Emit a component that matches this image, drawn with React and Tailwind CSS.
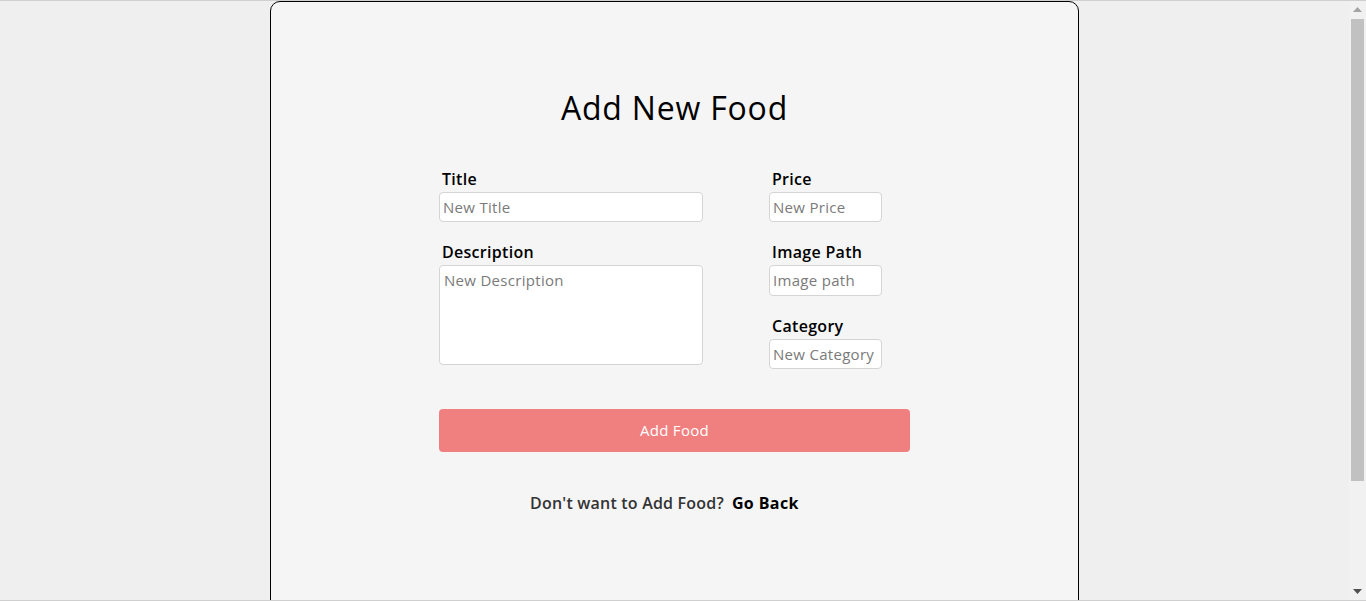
function Field({ label, placeholder, width, textarea }) {
  return (
    <div className="flex flex-col">
      <label className="pl-[3px] mb-px text-base leading-6 font-semibold text-black tracking-[0.3px]">{label}</label>
      {textarea ? (
        <textarea
          placeholder={placeholder}
          className={`${width} h-[100px] resize-none rounded bg-white border border-[#d4d4d4] px-1 py-[2px] text-[15px] leading-6 tracking-[0.3px] text-black placeholder:text-[#7a7a7a] outline-none`}
        />
      ) : (
        <input
          placeholder={placeholder}
          className={`${width} rounded bg-white border border-[#d4d4d4] px-[3px] pb-px text-[15px] tracking-[0.3px] text-black placeholder:text-[#7a7a7a] outline-none`}
        />
      )}
    </div>
  )
}

function Scrollbar() {
  return (
    <div className="w-[17px] h-full bg-[#f1f1f1] flex flex-col items-center">
      <div className="h-[17px] flex items-center justify-center">
        <svg width="9" height="5" viewBox="0 0 9 5"><path d="M4.5 0L9 5H0z" fill="#a3a3a3" /></svg>
      </div>
      <div className="w-[13px] h-[462px] bg-[#c1c1c1] mt-px" />
      <div className="flex-1" />
      <div className="h-[17px] flex items-center justify-center">
        <svg width="9" height="5" viewBox="0 0 9 5"><path d="M0 0H9L4.5 5z" fill="#505050" /></svg>
      </div>
    </div>
  )
}

export default function App() {
  return (
    <div
      className="h-[601px] flex overflow-hidden bg-[#efefef] border-t border-b border-[#cfcfcf]"
      style={{ fontFamily: '"Open Sans", "Noto Sans", sans-serif' }}
    >
      <div className="flex-1 overflow-hidden">
        <div className="mx-auto w-[60%] h-[736px] bg-[#f5f5f5] border border-black rounded-[10px] pt-[82px] flex flex-col items-center">
          <h1 className="text-[32px] leading-[48px] font-medium text-black tracking-[0.8px]">Add New Food</h1>

          <form className="mt-[35px] w-[471px] flex flex-col">
            <div className="flex gap-[66px]">
              <div className="flex flex-col gap-[18px]">
                <Field label="Title" placeholder="New Title" width="w-[264px] h-[30px]" />
                <Field label="Description" placeholder="New Description" width="w-[264px]" textarea />
              </div>
              <div className="flex flex-col gap-[18px]">
                <Field label="Price" placeholder="New Price" width="w-[113px] h-[30px]" />
                <Field label="Image Path" placeholder="Image path" width="w-[113px] h-[31px]" />
                <Field label="Category" placeholder="New Category" width="w-[113px] h-[30px]" />
              </div>
            </div>

            <button
              type="button"
              className="mt-10 h-[43px] w-full rounded bg-[#f08080] text-white text-[15px] tracking-[0.3px]"
            >
              Add Food
            </button>
          </form>

          <p className="mt-[39px] mr-5 text-base leading-6 font-semibold text-[#333333] tracking-[0.2px]">
            Don't want to Add Food?
            <a href="#" className="ml-2 font-bold text-black tracking-[0.4px]">Go Back</a>
          </p>
        </div>
      </div>
      <Scrollbar />
    </div>
  )
}
